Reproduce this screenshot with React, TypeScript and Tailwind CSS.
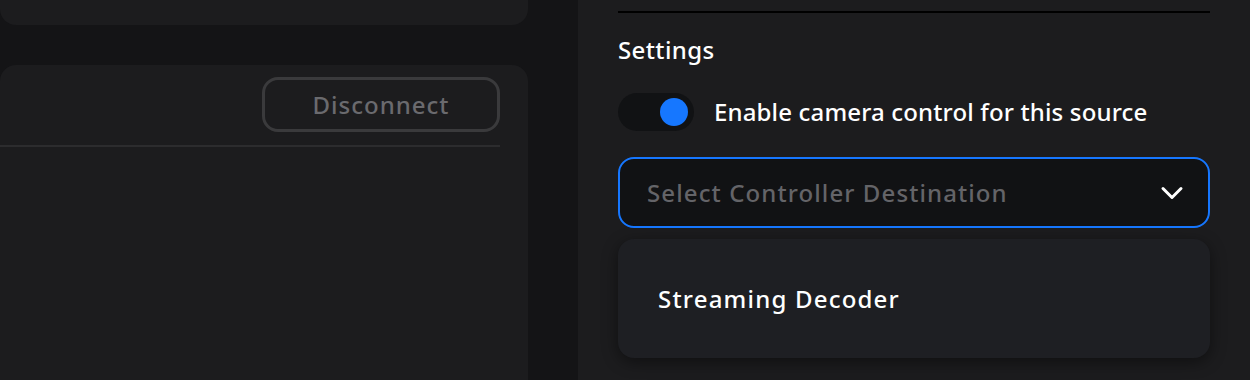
import { useState } from "react"

const Toggle = ({ on, onChange }: { on: boolean; onChange: () => void }) => {
  return (
    <button
      onClick={onChange}
      className="relative w-[76px] h-[38px] rounded-full bg-[#111214] shrink-0"
    >
      <span
        className={
          "absolute top-[5px] w-[28px] h-[28px] rounded-full " +
          (on ? "left-[42px] bg-[#1677ff]" : "left-[6px] bg-[#5a5a5e]")
        }
      />
    </button>
  )
}

const App = () => {
  const [enabled, setEnabled] = useState(true)
  return (
    <div
      className="flex w-full h-[380px] bg-[#141416] overflow-hidden"
      style={{ fontFamily: '"Noto Sans", "Open Sans", sans-serif' }}
    >
      {/* left column */}
      <div className="w-[578px] flex flex-col shrink-0">
        <div className="w-[528px] h-[25px] bg-[#1c1c1e] rounded-b-2xl" />
        <div className="w-[528px] flex-1 mt-[40px] bg-[#1c1c1e] rounded-t-2xl pt-[12px]">
          <div className="flex justify-end pr-[28px]">
            <button className="w-[238px] h-[55px] rounded-2xl border-[3px] border-[#3a3a3c] text-[24px] font-medium tracking-[1px] text-[#6a6a6e]">
              Disconnect
            </button>
          </div>
          <div className="w-[500px] h-[2px] bg-[#2c2c2e] mt-[13px]" />
        </div>
      </div>

      {/* right panel */}
      <div className="flex-1 bg-[#1c1c1e] px-[40px] pt-[11px]">
        <div className="h-[2px] bg-black" />
        <div className="mt-[21px] text-[24px] font-medium text-white leading-[32px] tracking-[0.4px]">Settings</div>
        <div className="mt-[27px] flex items-center gap-[20px]">
          <Toggle on={enabled} onChange={() => setEnabled(!enabled)} />
          <span className="text-[24px] font-medium tracking-[0.15px] text-white">Enable camera control for this source</span>
        </div>
        <div className="mt-[26px] h-[71px] rounded-2xl border-2 border-[#1677ff] bg-[#111214] flex items-center justify-between pl-[27px] pr-[24px]">
          <span className="text-[24px] font-medium tracking-[1.1px] text-[#646468]">Select Controller Destination</span>
          <svg width="24" height="16" viewBox="0 0 24 16" fill="none">
            <path d="M3 3.5l9 9 9-9" stroke="white" strokeWidth="3" strokeLinecap="round" strokeLinejoin="round" />
          </svg>
        </div>
        <div className="mt-[11px] h-[119px] rounded-2xl bg-[#1e1f23] shadow-[0_4px_16px_rgba(0,0,0,0.45)] flex items-center px-[40px]">
          <span className="text-[24px] font-medium tracking-[1.2px] text-white">Streaming Decoder</span>
        </div>
      </div>
    </div>
  )
}

export default App
